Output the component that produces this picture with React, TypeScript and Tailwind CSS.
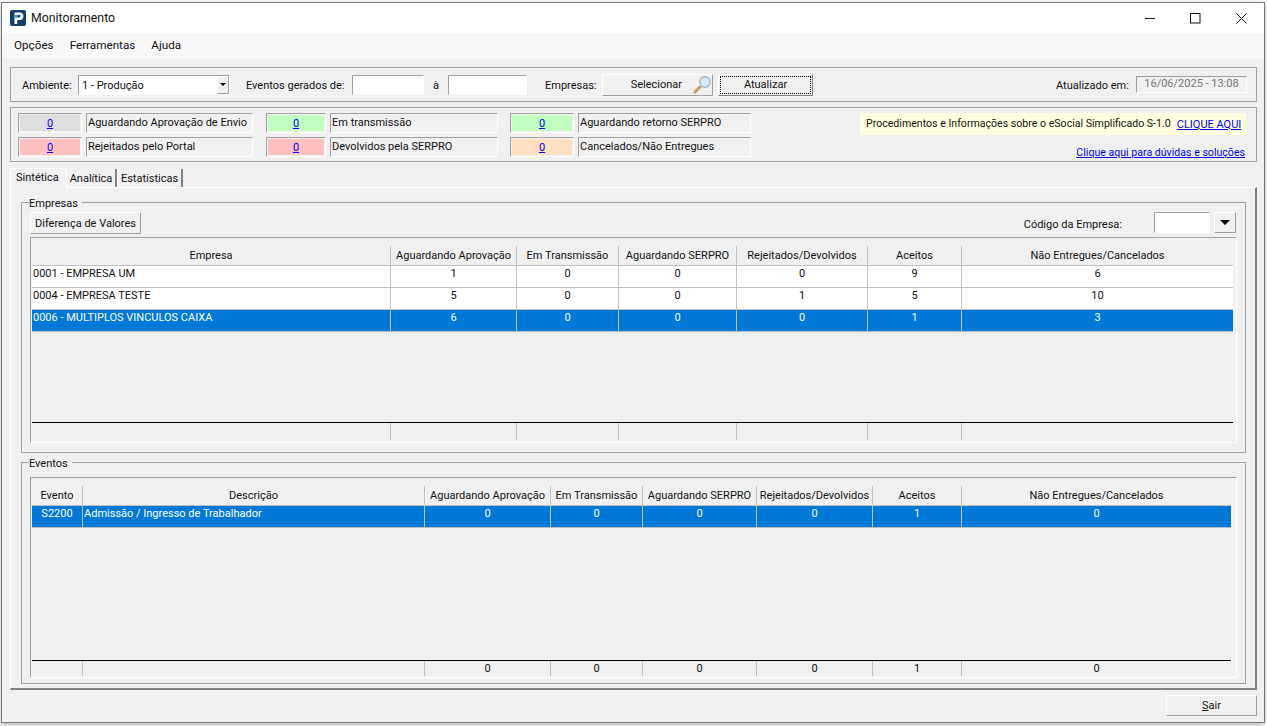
import React from "react";

const F = "font-['Roboto',sans-serif] text-[11px] leading-[14px] text-[#111]";
const sunken = "border border-t-[#a0a0a0] border-l-[#a0a0a0] border-b-white border-r-white";
const raised = "border border-t-white border-l-white border-b-[#a0a0a0] border-r-[#a0a0a0]";

function Status({ bg, w, label, lw }: { bg: string; w: string; label: string; lw: string }) {
  return (
    <div className="flex gap-1 h-5">
      <div className={`${sunken} ${w} h-5 p-[1px]`}>
        <div className={`${bg} h-full text-center text-[#0000ee] underline pt-[2px]`}>0</div>
      </div>
      <div className={`${sunken} ${lw} h-5 pl-[1px] pt-[2px] whitespace-nowrap`}>{label}</div>
    </div>
  );
}

function Cells({ cols, cells, cls, cellCls, height }: { cols: string; cells: string[]; cls: string; cellCls: string; height: string }) {
  return (
    <div className={`grid ${cols} ${height} ${cls}`}>
      {cells.map((c, i) => (
        <div
          key={i}
          className={`border-r border-[#c0c0c0] ${cellCls} ${i === cells.length - 1 ? "border-r-0" : ""} ${c.includes(" - ") || c.startsWith("Admiss") ? "text-left pl-[1px]" : "text-center"} truncate`}
        >
          {c}
        </div>
      ))}
    </div>
  );
}

function Table({ cols, width, head, rows, foot, h, selected, pb, footH }: { cols: string; width: string; head: string[]; rows: string[][]; foot: string[]; h: string; selected: number; pb: string; footH: string }) {
  return (
    <div className={`${sunken} ${h} pl-[1px] pt-[8px] ${pb} flex flex-col`}>
      <div className={`${width} flex flex-col flex-1`}>
        <Cells cols={cols} cells={head} cls="border-b border-[#c0c0c0]" cellCls="pt-[3px]" height="h-[20px]" />
        {rows.map((r, i) => (
          <Cells
            key={i}
            cols={cols}
            cells={r}
            cls={`border-b border-[#c0c0c0] ${i === selected ? "bg-[#0078d7] text-white" : "bg-white"}`}
            cellCls="pt-[1px]"
            height="h-[22px]"
          />
        ))}
        <div className="flex-1" />
        <div className="border-t border-black" />
        <Cells cols={cols} cells={foot} cls="" cellCls="pt-[1px]" height={footH} />
      </div>
    </div>
  );
}

function Group({ title, h, children }: { title: string; h: string; children: React.ReactNode }) {
  return (
    <div className={`border border-[#a0a0a0] ${h} px-2`}>
      <div className="-mt-[6px] -ml-[1px] h-[13px]">
        <span className="bg-[#f0f0f0] pr-1">{title}</span>
      </div>
      {children}
    </div>
  );
}

export default function App() {
  const cols1 = "grid-cols-[359px_126px_102px_118px_131px_94px_271px]";
  const cols2 = "grid-cols-[51px_342px_126px_92px_114px_116px_89px_269px]";
  return (
    <div className={`${F} w-[1267px] h-[726px] overflow-hidden bg-white pt-[2px] pl-[1px]`}>
      <div className="w-[1264px] h-[721px] border border-[#777] bg-[#f0f0f0] shadow-[0_2px_6px_rgba(0,0,0,0.3)] flex flex-col">
        {/* title bar */}
        <div className="h-[30px] shrink-0 bg-white flex items-center pl-[8px]">
          <svg width="16" height="16" viewBox="0 0 16 16">
            <rect width="16" height="16" rx="2" fill="#12406e" />
            <path d="M4.5 2.5h5.2a3.6 3.6 0 0 1 0 7.4H7.2V14H4.5z" fill="#fff" />
            <rect x="7.2" y="5" width="3" height="2.4" fill="#12406e" />
            <rect x="4.5" y="5" width="2.7" height="2.6" fill="#2aa3e0" />
          </svg>
          <span className="ml-[5px] text-[12.3px]">Monitoramento</span>
          <div className="ml-auto flex items-center">
            <svg width="11" height="11" viewBox="0 0 11 11" className="mr-[34px]"><path d="M0 5.5h10" stroke="#111" fill="none" /></svg>
            <svg width="11" height="11" viewBox="0 0 11 11" className="mr-[35px]"><rect x="0.5" y="0.5" width="9.5" height="9.5" stroke="#111" fill="none" /></svg>
            <svg width="11" height="11" viewBox="0 0 11 11" className="mr-[17px]"><path d="M0.5 0.5l10 10M10.5 0.5l-10 10" stroke="#111" fill="none" /></svg>
          </div>
        </div>
        {/* menu */}
        <div className="h-[25px] shrink-0 bg-[#f8f8f8] flex items-center gap-[16px] pl-[12px] pb-[2px] text-[11.7px]">
          <span>Opções</span><span>Ferramentas</span><span>Ajuda</span>
        </div>

        <div className="flex-1 pl-[8px] pr-[7px] pt-[9px] flex flex-col">
          {/* filter panel */}
          <div className="border border-[#a0a0a0] h-[35px] shrink-0 flex items-center pl-[11px] pr-[9px]">
            <span className="w-[56px] pt-[2px]">Ambiente:</span>
            <div className={`${sunken} w-[152px] h-[20px] bg-white flex items-center pl-[3px]`}>
              <span className="flex-1 pt-[2px]">1 - Produção</span>
              <div className={`${raised} w-[12px] h-[18px] bg-[#f0f0f0] flex items-center justify-center`}>
                <div className="w-0 h-0 border-x-[3px] border-x-transparent border-t-[3px] border-t-black" />
              </div>
            </div>
            <span className="ml-[16px] w-[106px] pt-[2px]">Eventos gerados de:</span>
            <div className={`${sunken} w-[72px] h-[20px] bg-white`} />
            <span className="w-[24px] text-center pt-[2px]">à</span>
            <div className={`${sunken} w-[79px] h-[20px] bg-white`} />
            <span className="ml-[18px] w-[57px] pt-[2px]">Empresas:</span>
            <div className={`${raised} w-[111px] h-[22px] flex items-center justify-end pr-[1px] gap-[11px]`}>
              <span>Selecionar</span>
              <svg width="18" height="18" viewBox="0 0 18 18">
                <path d="M7 11l-5 5" stroke="#c8985e" strokeWidth="3" strokeLinecap="round" />
                <circle cx="12" cy="6" r="5.2" fill="#d6ebfa" stroke="#a8b4bc" strokeWidth="1.4" />
              </svg>
            </div>
            <div className="ml-[5px] w-[95px] h-[22px] border border-t-white border-l-white border-b-[#808080] border-r-[#808080] p-[1px]">
              <div className="h-full border border-dotted border-black flex items-center justify-center">Atualizar</div>
            </div>
            <span className="ml-auto w-[80px] pt-[2px]">Atualizado em:</span>
            <div className={`${sunken} w-[111px] h-[17px] text-center text-[#777]`}>16/06/2025 - 13:08</div>
          </div>

          {/* status panel */}
          <div className="mt-[5px] border border-[#a0a0a0] h-[55px] shrink-0 flex pl-[7px] pt-[5px] pr-[10px]">
            <div className="flex flex-col gap-1 w-[248px]">
              <Status bg="bg-[#dedede]" w="w-[64px]" lw="w-[167px]" label="Aguardando Aprovação de Envio" />
              <Status bg="bg-[#ffc0c0]" w="w-[64px]" lw="w-[167px]" label="Rejeitados pelo Portal" />
            </div>
            <div className="flex flex-col gap-1 w-[244px]">
              <Status bg="bg-[#c0ffc0]" w="w-[60px]" lw="w-[168px]" label="Em transmissão" />
              <Status bg="bg-[#ffc0c0]" w="w-[60px]" lw="w-[168px]" label="Devolvidos pela SERPRO" />
            </div>
            <div className="flex flex-col gap-1 w-[241px]">
              <Status bg="bg-[#c0ffc0]" w="w-[64px]" lw="w-[173px]" label="Aguardando retorno SERPRO" />
              <Status bg="bg-[#ffdfc0]" w="w-[64px]" lw="w-[173px]" label="Cancelados/Não Entregues" />
            </div>
            <div className="ml-auto flex flex-col items-end w-[386px] text-[10.6px]">
              <div className="w-full h-[22px] bg-[#ffffe0] flex items-center pl-[6px] gap-[6px] whitespace-nowrap">
                <span>Procedimentos e Informações sobre o eSocial Simplificado S-1.0</span>
                <span className="text-[#0000ee] underline text-[11px] pt-[1px]">CLIQUE AQUI</span>
              </div>
              <span className="mt-[11px] pr-[1px] text-[#0000ee] underline">Clique aqui para dúvidas e soluções</span>
            </div>
          </div>

          {/* tabs */}
          <div className="mt-[5px] h-[20px] shrink-0 flex items-end">
            <div className="h-[20px] w-[56px] bg-[#f0f0f0] border-t border-l border-white pl-[5px] pt-[2px] -mb-[1px] relative z-10">Sintética</div>
            <div className="h-[18px] w-[51px] border-r-2 border-l border-l-white border-r-[#808080] pt-[3px] text-center">Analítica</div>
            <div className="h-[18px] w-[66px] border-r-2 border-l border-l-white border-r-[#808080] text-center pt-[3px]">Estatísticas</div>
          </div>

          {/* tab page */}
          <div className="h-[503px] shrink-0 border border-t-white border-l-white border-r-2 border-b-2 border-r-[#808080] border-b-[#808080] pl-[10px] pr-[9px] pt-[14px]">
            <Group title="Empresas" h="h-[251px]">
              <div className="flex items-start h-[22px] mt-[2px] mr-[1px]">
                <div className={`${raised} w-[111px] h-[22px] flex items-center justify-center pt-[2px]`}>Diferença de Valores</div>
                <span className="ml-auto">
                  <span className="block mt-[6px] mr-[32px]">Código da Empresa:</span>
                </span>
                <div className={`${sunken} w-[56px] h-[21px] bg-white`} />
                <div className={`${raised} ml-[4px] w-[22px] h-[21px] flex items-center justify-center`}>
                  <div className="w-0 h-0 border-x-[5px] border-x-transparent border-t-[5px] border-t-black" />
                </div>
              </div>
              <div className="mt-[3px]">
                <Table
                  cols={cols1}
                  width="w-[1201px]"
                  h="h-[206px]"
                  selected={2}
                  pb="pb-[2px]"
                  footH="h-[17px]"
                  head={["Empresa", "Aguardando Aprovação", "Em Transmissão", "Aguardando SERPRO", "Rejeitados/Devolvidos", "Aceitos", "Não Entregues/Cancelados"]}
                  rows={[
                    ["0001 - EMPRESA UM", "1", "0", "0", "0", "9", "6"],
                    ["0004 - EMPRESA TESTE", "5", "0", "0", "1", "5", "10"],
                    ["0006 - MULTIPLOS VINCULOS CAIXA", "6", "0", "0", "0", "1", "3"],
                  ]}
                  foot={["", "", "", "", "", "", ""]}
                />
              </div>
            </Group>
            <div className="mt-[9px]">
              <Group title="Eventos" h="h-[222px]">
                <div className="mt-[7px]">
                  <Table
                    cols={cols2}
                    width="w-[1199px]"
                    h="h-[201px]"
                    selected={0}
                    pb="pb-[1px]"
                    footH="h-[15px]"
                    head={["Evento", "Descrição", "Aguardando Aprovação", "Em Transmissão", "Aguardando SERPRO", "Rejeitados/Devolvidos", "Aceitos", "Não Entregues/Cancelados"]}
                    rows={[["S2200", "Admissão / Ingresso de Trabalhador", "0", "0", "0", "0", "1", "0"]]}
                    foot={["", "", "0", "0", "0", "0", "1", "0"]}
                  />
                </div>
              </Group>
            </div>
          </div>

          {/* footer */}
          <div className="flex justify-end mt-[5px]">
            <div className={`${raised} w-[91px] h-[21px] flex items-center justify-center`}>
              <span><span className="underline">S</span>air</span>
            </div>
          </div>
        </div>
      </div>
    </div>
  );
}
